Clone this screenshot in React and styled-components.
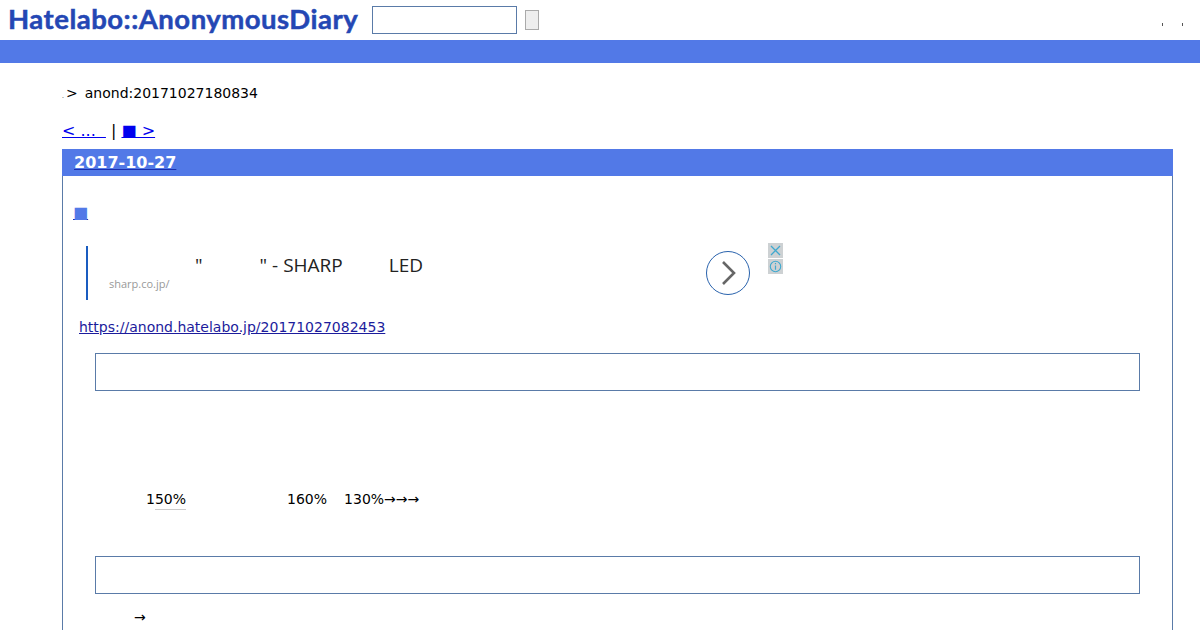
import React from "react";
import styled, { createGlobalStyle } from "styled-components";

const Global = createGlobalStyle`
  html, body { margin: 0; padding: 0; background: #fff; }
  body { font-family: "DejaVu Sans", sans-serif; font-size: 14px; color: #000; }
`;
const Page = styled.div`
  height: 630px;
  overflow: hidden;
`;
const Header = styled.header`
  height: 40px;
  display: flex;
  align-items: center;
  padding-left: 8px;
  box-sizing: border-box;
  position: relative;
`;
const Logo = styled.div`
  font-family: "Lato", sans-serif;
  font-weight: 700;
  font-size: 27.5px;
  letter-spacing: 0.5px;
  line-height: 34px;
  padding-bottom: 3px;
  color: #2447b4;
  width: 364px;
  white-space: nowrap;
  -webkit-text-stroke: 0.5px #2447b4;
`;
const SearchInput = styled.div`
  width: 143px;
  height: 26px;
  border: 1px solid #5a7ba8;
  margin-right: 8px;
`;
const SearchButton = styled.div`
  width: 12px;
  height: 18px;
  background: #eee;
  border: 1px solid #aaa;
`;
const UserLinks = styled.div`
  margin-left: auto;
  display: flex;
  gap: 19px;
  padding: 9px 17px 0 0;
`;
const Tick = styled.span`
  width: 1px;
  height: 3px;
  background: #555;
`;
const Bar = styled.div`
  height: 23px;
  background: #5279e7;
`;
const Main = styled.main`
  margin-left: 62px;
  width: 1111px;
`;
const Crumb = styled.div`
  display: flex;
  align-items: baseline;
  height: 17px;
  margin-top: 22px;
  line-height: 17px;
`;
const CrumbDot = styled.span`
  font-size: 6px;
  width: 4px;
`;
const CrumbSep = styled.span`
  width: 7px;
`;
const Pager = styled.div`
  font-size: 16px;
  line-height: 19px;
  margin-top: 19px;
  height: 19px;
  white-space: pre;
`;
const PagerLink = styled.a`
  color: #00e;
  text-decoration: underline;
`;
const Section = styled.section`
  margin-top: 9px;
  border-left: 1px solid #5a7ba8;
  border-right: 1px solid #5a7ba8;
  height: 481px;
`;
const DateBar = styled.h2`
  margin: 0 -1px;
  height: 27px;
  background: #5279e7;
  padding-left: 12px;
  font-size: 16px;
  font-weight: 700;
  line-height: 27px;
  color: #fff;
  a { color: #fff; text-decoration: underline; text-decoration-color: #1a2fb0; }
`;
const Body = styled.div`
  padding-left: 11px;
`;
const EntryMark = styled.div`
  margin: 27px 0 0 -1px;
  height: 19px;
  font-size: 16px;
  line-height: 19px;
  a { color: #5279e7; text-decoration: underline; text-decoration-color: #1a2fb0; }
`;
const Ad = styled.div`
  margin: 24px 0 0 12px;
  height: 54px;
  width: 697px;
  border-left: 2px solid #1a5cc0;
  position: relative;
  display: flex;
  flex-direction: column;
  font-family: "Open Sans", sans-serif;
`;
const AdTitle = styled.div`
  margin-top: 8px;
  height: 23px;
  font-size: 19px;
  line-height: 23px;
  white-space: nowrap;
  display: flex;
  padding-left: 107px;
  color: #222;
`;
const Gap = styled.span`
  display: inline-block;
  flex: none;
  width: ${(p) => p.$w}px;
`;
const AdUrl = styled.div`
  margin: -1px 0 0 21px;
  font-size: 11px;
  line-height: 16px;
  color: #999;
`;
const AdArrow = styled.svg`
  position: absolute;
  left: 618px;
  top: 5px;
`;
const AdBadges = styled.div`
  position: absolute;
  left: 680px;
  top: -3px;
  display: flex;
  flex-direction: column;
  gap: 1px;
`;
const Badge = styled.svg`
  display: block;
  background: #cdd1d3;
`;
const Source = styled.a`
  display: block;
  margin: 19px 0 0 5px;
  height: 17px;
  line-height: 17px;
  color: #1c1c9c;
  text-decoration: underline;
  width: max-content;
`;
const Quote = styled.div`
  margin: ${(p) => p.$top}px 0 0 21px;
  width: 1043px;
  height: 36px;
  border: 1px solid #5a7ba8;
`;
const Para = styled.p`
  margin: ${(p) => p.$top}px 0 0 ${(p) => p.$left}px;
  height: 17px;
  line-height: 17px;
  display: flex;
  white-space: nowrap;
`;
const Under = styled.span`
  position: relative;
  &::after {
    content: "";
    position: absolute;
    left: 9px;
    right: 0;
    bottom: -2px;
    height: 1px;
    background: #ccc;
  }
`;

export default function App() {
  return (
    <Page>
      <Global />
      <Header>
        <Logo>Hatelabo::AnonymousDiary</Logo>
        <SearchInput />
        <SearchButton />
        <UserLinks>
          <Tick />
          <Tick />
        </UserLinks>
      </Header>
      <Bar />
      <Main>
        <Crumb>
          <CrumbDot>.</CrumbDot>
          <span>&gt;</span>
          <CrumbSep />
          <span>anond:20171027180834</span>
        </Crumb>
        <Pager>
          <PagerLink href="#">&lt; ...  </PagerLink> | <PagerLink href="#">■ &gt;</PagerLink>
        </Pager>
        <Section>
          <DateBar>
            <a href="#">2017-10-27</a>
          </DateBar>
          <Body>
            <EntryMark>
              <a href="#">■</a>
            </EntryMark>
            <Ad>
              <AdTitle>
                <span>"</span>
                <Gap $w={57} />
                <span>" - SHARP</span>
                <Gap $w={46} />
                <span>LED</span>
              </AdTitle>
              <AdUrl>sharp.co.jp/</AdUrl>
              <AdArrow width="44" height="44" viewBox="0 0 44 44">
                <circle cx="22" cy="22" r="21.5" fill="#fff" stroke="#2a63ad" strokeWidth="1" />
                <path d="M17 11 L28 22 L17 33" fill="none" stroke="#666" strokeWidth="2.6" />
              </AdArrow>
              <AdBadges>
                <Badge width="15" height="15" viewBox="0 0 15 15">
                  <path d="M3 3 L12 12 M12 3 L3 12" stroke="#3fa9cf" strokeWidth="1.3" fill="none" />
                </Badge>
                <Badge width="15" height="15" viewBox="0 0 15 15">
                  <circle cx="7.5" cy="7.5" r="5.2" fill="none" stroke="#3fa9cf" strokeWidth="1.1" />
                  <path d="M7.5 6.5 V10.8 M7.5 4 V5.2" stroke="#3fa9cf" strokeWidth="1.2" fill="none" />
                </Badge>
              </AdBadges>
            </Ad>
            <Source href="#">https://anond.hatelabo.jp/20171027082453</Source>
            <Quote $top={17} />
            <Para $top={100} $left={72}>
              <Under>150%</Under>
              <Gap $w={101} />
              <span>160%</span>
              <Gap $w={17} />
              <span>130%→→→</span>
            </Para>
            <Quote $top={48} />
            <Para $top={15} $left={60}>
              <span>→</span>
            </Para>
          </Body>
        </Section>
      </Main>
    </Page>
  );
}
